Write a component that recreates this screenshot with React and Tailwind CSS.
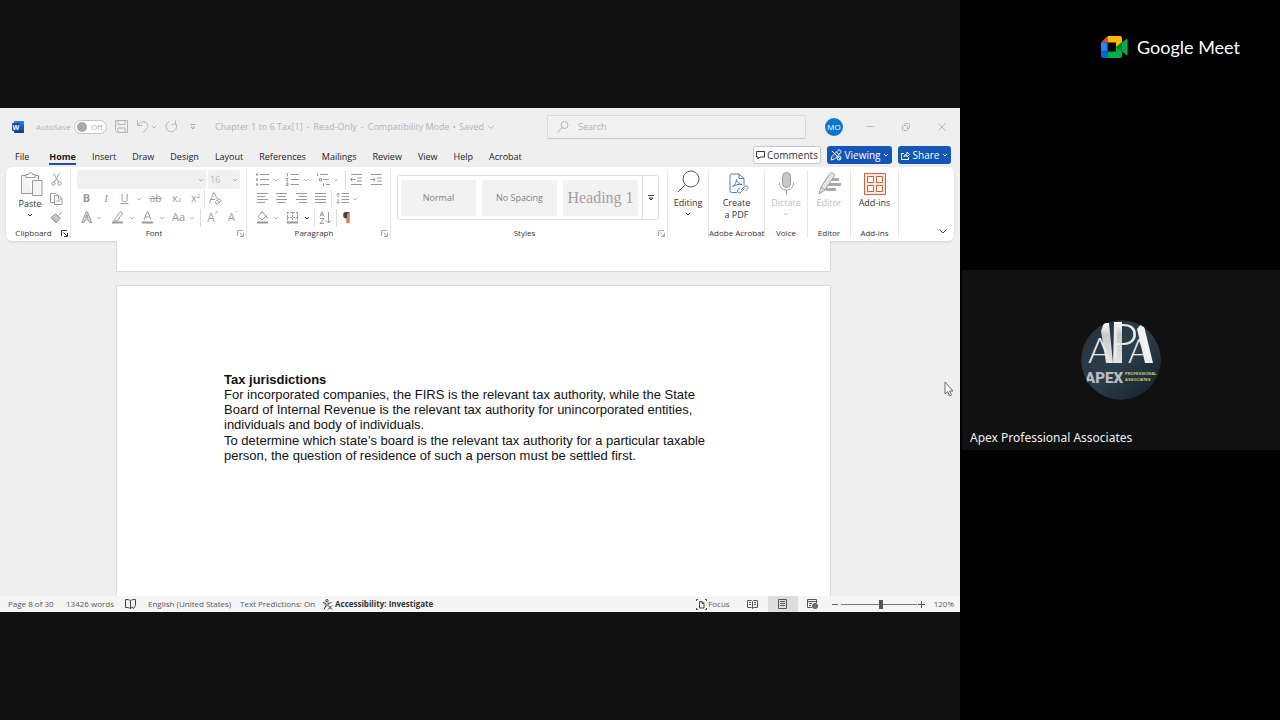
import React from "react";

const tabs = [
  "File",
  "Home",
  "Insert",
  "Draw",
  "Design",
  "Layout",
  "References",
  "Mailings",
  "Review",
  "View",
  "Help",
  "Acrobat",
];

function Chevron({ className = "text-[#b4b4b4]" }) {
  return (
    <svg className={`h-[6px] w-[6px] shrink-0 ${className}`} viewBox="0 0 6 6" fill="none" stroke="currentColor">
      <path d="M1 2l2 2 2-2" />
    </svg>
  );
}

function Tool({ label, className = "w-4", children }) {
  return (
    <button aria-label={label} className={`flex h-[19px] shrink-0 items-center justify-center ${className}`}>
      {children}
    </button>
  );
}

function MenuTool({ label, className = "", chevron, children }) {
  return (
    <button aria-label={label} className={`flex h-[19px] shrink-0 items-center justify-between ${className}`}>
      {children}
      <Chevron className={chevron} />
    </button>
  );
}

function Line({ className = "" }) {
  return <span className={`h-[18px] w-px shrink-0 bg-[#dcdcdc] ${className}`} />;
}

function Glyph({ children, className = "" }) {
  return (
    <svg
      className={`h-[13px] w-[13px] shrink-0 ${className}`}
      viewBox="0 0 13 13"
      fill="none"
      stroke="currentColor"
    >
      {children}
    </svg>
  );
}

function Group({ label, className = "", launcher, children }) {
  return (
    <section className={`flex shrink-0 flex-col border-r border-[#e8e8e8] ${className}`}>
      <div className="h-[58px]">{children}</div>
      <div className="flex h-[10px] items-center text-[8px] leading-[10px] text-[#333]">
        <span className="flex-1 text-center whitespace-nowrap">{label}</span>
        {launcher && (
          <button aria-label={`${label} settings`} className={`mr-[2px] ${launcher}`}>
            <svg className="h-[7px] w-[7px]" viewBox="0 0 7 7" fill="none" stroke="currentColor">
              <path d="M.5 6V.5H6M2.500 2.500l3.500 3.500M6.500 3v3.500H3" />
            </svg>
          </button>
        )}
      </div>
    </section>
  );
}

function BigButton({ label, className = "text-[#333]", icon, arrow, lines }) {
  return (
    <button aria-label={label} className={`flex w-full flex-col items-center text-[9px] leading-[12px] ${className}`}>
      <span className="flex h-[27px] items-center">{icon}</span>
      {lines.map((line) => (
        <span key={line} className="whitespace-nowrap">
          {line}
        </span>
      ))}
      {arrow && <Chevron className="mt-[2px] text-current" />}
    </button>
  );
}

function TitleBar() {
  return (
    <header className="flex h-[37px] items-center text-[9px] text-[#b4b4b4]">
      <div className="flex w-[547px] shrink-0 items-center pl-3">
        <svg className="h-3 w-3" viewBox="0 0 12 12">
          <rect x="2" width="10" height="12" rx="1" fill="#2b7cd3" />
          <rect x="2" y="3" width="10" height="3" fill="#2368c4" />
          <rect x="2" y="6" width="10" height="3" fill="#185abd" />
          <path d="M2 9h10v2a1 1 0 01-1 1H3a1 1 0 01-1-1z" fill="#103f91" />
          <rect y="2" width="8" height="8" rx="1" fill="#164a9c" />
          <text x="4" y="8.500" textAnchor="middle" fontSize="7" fontWeight="700" fill="#fff">
            W
          </text>
        </svg>
        <label htmlFor="autosave" className="ml-3 w-[38px] text-[8px]">
          AutoSave
        </label>
        <button
          id="autosave"
          role="switch"
          aria-checked="false"
          className="flex h-[14px] w-[33px] items-center gap-1 rounded-full border border-[#c4c4c4] bg-white pl-[2px] text-[8px]"
        >
          <span className="h-[10px] w-[10px] rounded-full bg-[#a9a9a9]" />
          Off
        </button>
        <Tool label="Save" className="ml-[7px] w-[14px]">
          <Glyph>
            <path d="M1 .5h11.500v12H2.500l-2-2V.5zM3 .5v4h7v-4M3 12.500V8h7v4.500" />
          </Glyph>
        </Tool>
        <MenuTool label="Undo" className="ml-2 w-[21px]">
          <Glyph>
            <path d="M1.500.5v5h5M1.500 5.500C4 2 7.500.8 10 2.500s2.300 4.500.5 6.200L7 12.500" />
          </Glyph>
        </MenuTool>
        <Tool label="Redo" className="ml-[7px] w-[14px]">
          <Glyph>
            <path d="M10.500.5v3.800H6.700M4 1.700a5.300 5.300 0 106.500 1.500" />
          </Glyph>
        </Tool>
        <Tool label="Customize toolbar" className="ml-[7px] w-4">
          <svg className="h-[6px] w-[6px]" viewBox="0 0 6 6" fill="none" stroke="currentColor">
            <path d="M0 .5h6M1 3h4L3 5z" />
          </svg>
        </Tool>
        <button className="ml-[14px] flex items-center gap-[3px] whitespace-nowrap">
          <span>Chapter 1 to 6 Tax[1]</span>
          <span className="px-px">-</span>
          <span>Read-Only</span>
          <span className="px-px">-</span>
          <span>Compatibility Mode</span>
          <span>•</span>
          <span>Saved</span>
          <svg className="h-2 w-2" viewBox="0 0 8 8" fill="none" stroke="currentColor">
            <path d="M1 2.500l3 3 3-3" />
          </svg>
        </button>
      </div>
      <label className="flex h-6 flex-1 items-center gap-[9px] rounded-[2px] border border-[#dadada] border-b-[#c8c8c8] bg-[#f1f1f1] px-[9px]">
        <svg className="h-3 w-3 shrink-0" viewBox="0 0 12 12" fill="none" stroke="currentColor">
          <circle cx="7.500" cy="4" r="3.500" />
          <path d="M5 6.500L.5 11.500" />
        </svg>
        <input
          aria-label="Search"
          placeholder="Search"
          className="w-full bg-transparent text-[9px] outline-none placeholder:text-[#b0b0b0]"
        />
      </label>
      <div className="flex w-[154px] shrink-0 items-center pl-[19px]">
        <button className="flex h-[18px] w-[18px] items-center justify-center rounded-full bg-[#0a78d0] text-[8px] text-white">
          MO
        </button>
        <Tool label="Minimize" className="ml-[18px] w-[18px]">
          <span className="h-px w-2 bg-[#bdbdbd]" />
        </Tool>
        <Tool label="Restore" className="ml-[18px] w-[18px]">
          <svg className="h-2 w-2" viewBox="0 0 8 8" fill="none" stroke="currentColor">
            <rect x=".5" y="2.500" width="5" height="5" rx="1" />
            <path d="M2.500 2V1.500a1 1 0 011-1h3a1 1 0 011 1v3a1 1 0 01-1 1H6" />
          </svg>
        </Tool>
        <Tool label="Close" className="ml-[18px] w-[18px]">
          <svg className="h-2 w-2" viewBox="0 0 8 8" fill="none" stroke="currentColor">
            <path d="M.5.5l7 7M7.500.5l-7 7" />
          </svg>
        </Tool>
      </div>
    </header>
  );
}

function TabBar() {
  return (
    <div className="flex h-[22px] items-center pr-[9px] pl-[15px]">
      <nav className="flex flex-1 items-center gap-4 text-[9px] text-[#222]">
        {tabs.map((tab) => (
          <a
            key={tab}
            href="#"
            className={
              tab === "Home"
                ? "ml-1 border-b-2 border-[#1d4f9e] pt-[2px] leading-[13px] font-bold"
                : "leading-[13px]"
            }
          >
            {tab}
          </a>
        ))}
      </nav>
      <div className="mb-[2px] flex gap-[6px] text-[10px]">
        <button className="flex h-[18px] w-[68px] items-center justify-center gap-[2px] rounded-[3px] border border-[#c6c6c6] bg-white text-[#333]">
          <svg className="h-[9px] w-[9px]" viewBox="0 0 9 9" fill="none" stroke="currentColor">
            <path d="M1 .5h7.500v5.500H4L2 8V6H.5V.5z" />
          </svg>
          Comments
        </button>
        <button className="flex h-[18px] w-[65px] items-center justify-center gap-[3px] rounded-[3px] bg-[#1356b8] text-white">
          <svg className="h-3 w-3" viewBox="0 0 12 12" fill="none" stroke="currentColor">
            <path d="M1 11l1-3.500L8 1.500a1.600 1.600 0 012.500 2.300L4.500 10zM2 2l8.500 8.500M6.500 3l2.500 2.500" />
            <circle cx="9" cy="9" r="2" />
          </svg>
          Viewing
          <Chevron className="text-white" />
        </button>
        <button className="flex h-[18px] w-[53px] items-center justify-center gap-[3px] rounded-[3px] bg-[#1356b8] text-white">
          <svg className="h-[9px] w-[9px]" viewBox="0 0 9 9" fill="none" stroke="currentColor">
            <path d="M3 2.500H.5v6h7V6.500M3 6c.3-2 1.500-3 3-3V1l2.500 2.500L6 6V4.500c-1.300 0-2.200.4-3 1.500z" />
          </svg>
          Share
          <Chevron className="text-white" />
        </button>
      </div>
    </div>
  );
}

function ClipboardGroup() {
  return (
    <Group label="Clipboard" launcher="text-[#333]" className="w-[65px]">
      <div className="flex">
        <button className="ml-[10px] flex w-7 flex-col items-center text-[9px] leading-[12px] text-[#333]">
          <svg className="mt-[2px] mb-[2px] ml-1 h-6 w-[22px] text-[#999]" viewBox="0 0 22 24" fill="none" stroke="currentColor">
            <path d="M5 3.500H.5v18H11M13 3.500h4.500V8" fill="#f3f3f3" />
            <path d="M5 5.500v-3h2.500a2 2 0 014 0H14v3z" fill="#fff" />
            <path d="M11.500 8.500h9.500v15h-9.500z" fill="#f6f6f6" />
          </svg>
          Paste
          <Chevron className="mt-[2px] text-[#444]" />
        </button>
        <div className="ml-1 flex flex-col text-[#999]">
          <Tool label="Cut">
            <Glyph>
              <path d="M3.500.5l5 8.500M9.500.5L4.500 9" />
              <circle cx="3.500" cy="10.500" r="1.700" />
              <circle cx="9.500" cy="10.500" r="1.700" />
            </Glyph>
          </Tool>
          <Tool label="Copy">
            <Glyph>
              <path d="M4 10.500H.5v-9H6l2 2M4.500 3.500H9l3 3v6H4.500zM8.500 3.500v3.500H12M6.500 9h3.500" />
            </Glyph>
          </Tool>
          <Tool label="Format Painter">
            <Glyph>
              <path d="M12 .8L8.500 4.500M5.500 3L10 7.500M5.500 3L1 6.500 6 12l4-4.500zM3 8l2-1.500M4.500 10l2-2" fill="#ccc" />
            </Glyph>
          </Tool>
        </div>
      </div>
    </Group>
  );
}

function FontGroup() {
  return (
    <Group label="Font" launcher="text-[#a8a8a8]" className="w-[176px]">
      <div className="flex flex-col pl-[6px] text-[#9a9a9a]">
        <div className="flex h-[19px] gap-[2px] text-[9px]">
          <div className="flex w-[129px] items-center rounded-[2px] bg-[#f0f0f0] pr-[2px]">
            <select aria-label="Font name" className="min-w-0 flex-1 appearance-none bg-transparent">
              <option></option>
            </select>
            <Chevron />
          </div>
          <div className="flex w-8 items-center rounded-[2px] bg-[#f0f0f0] pr-[2px] pl-[2px]">
            <select aria-label="Font size" className="min-w-0 flex-1 appearance-none bg-transparent text-[#bbb]">
              <option>16</option>
            </select>
            <Chevron />
          </div>
        </div>
        <div className="flex h-[19px] items-center text-[11px]">
          <Tool label="Bold" className="w-[19px] font-bold">
            B
          </Tool>
          <Tool label="Italic" className="w-5 font-['Liberation_Serif',serif] italic">
            I
          </Tool>
          <Tool label="Underline" className="w-[17px] underline">
            U
          </Tool>
          <Tool label="Underline style" className="w-3">
            <Chevron />
          </Tool>
          <Tool label="Strikethrough" className="w-[21px] text-[10px] line-through">
            ab
          </Tool>
          <Tool label="Subscript" className="w-[21px]">
            x<sub className="text-[6px]">2</sub>
          </Tool>
          <Tool label="Superscript" className="w-[17px]">
            x<sup className="text-[6px]">2</sup>
          </Tool>
          <Line />
          <Tool label="Clear formatting" className="w-[21px]">
            <Glyph>
              <path d="M.5 11L4.500.8h.8L8 6.500M2 7.500h4M6.500 10l3-3.500 2.500 2-3 3.500H7.500zM8 8.300l2.500 2" />
            </Glyph>
          </Tool>
        </div>
        <div className="flex h-[19px] items-center text-[11px]">
          <MenuTool label="Text effects" className="ml-1 w-[21px]">
            <Glyph className="-mr-1">
              <path d="M.8 11.500L5 1h1.500l4.200 10.500H8.500l-1-2.700H4l-1 2.700zM4.800 6.700h2L5.800 3.500z" fill="#ddd" />
            </Glyph>
          </MenuTool>
          <MenuTool label="Highlight color" className="ml-[9px] w-[24px]">
            <Glyph>
              <path d="M3.500 8.500L9 1.200c1-1 3 .4 2.200 1.700L6 10H3z" />
              <path d="M1 11.500h11" strokeWidth="2" />
            </Glyph>
          </MenuTool>
          <MenuTool label="Font color" className="ml-[6px] w-[24px]">
            <Glyph>
              <path d="M3 8.500L6.200.8h.6L10 8.500M4 6h5" />
              <path d="M1 11.500h11" strokeWidth="2" />
            </Glyph>
          </MenuTool>
          <MenuTool label="Change case" className="ml-[7px] w-[23px]">
            Aa
          </MenuTool>
          <Line className="ml-[5px]" />
          <Tool label="Grow font" className="ml-1 w-4 text-[12px]">
            A<sup className="text-[7px]">^</sup>
          </Tool>
          <Tool label="Shrink font" className="ml-1 w-4">
            A<sup className="text-[7px]">ˇ</sup>
          </Tool>
        </div>
      </div>
    </Group>
  );
}

function ParagraphGroup() {
  return (
    <Group label="Paragraph" launcher="text-[#a8a8a8]" className="w-36">
      <div className="flex flex-col pl-[9px] text-[#999]">
        <div className="flex h-[19px] items-center">
          <MenuTool label="Bullets" className="w-[23px]">
            <Glyph>
              <path d="M4 1.500h9M4 6.500h9M4 11.500h9" />
              <path d="M0 1.500h2M0 6.500h2M0 11.500h2" strokeWidth="2" />
            </Glyph>
          </MenuTool>
          <MenuTool label="Numbering" className="ml-[7px] w-[23px]">
            <Glyph>
              <path d="M4.500 1.500H13M4.500 6.500H13M4.500 11.500H13M.5.5h1v3M0 5.500h2L.5 8H2M0 10h2v2.500H0M.5 11.200H2" />
            </Glyph>
          </MenuTool>
          <MenuTool label="Multilevel list" className="ml-[8px] w-[22px]">
            <Glyph>
              <path d="M3 1.500h8M6 6.500h6M9 11.500h4M.5 0v3M2.500 5.500h2v2.500h-2zM6.500 10v3" />
            </Glyph>
          </MenuTool>
          <Line className="ml-[6px]" />
          <Tool label="Decrease indent" className="ml-1 w-[13px]">
            <Glyph>
              <path d="M1 1.500h11M7 5h5M7 8h5M1 11.500h11M5.500 6.500h-5M2.500 4.500l-2 2 2 2" />
            </Glyph>
          </Tool>
          <Tool label="Increase indent" className="ml-[7px] w-[13px]">
            <Glyph>
              <path d="M1 1.500h11M7 5h5M7 8h5M1 11.500h11M0 6.500h5M3 4.500l2 2-2 2" />
            </Glyph>
          </Tool>
        </div>
        <div className="flex h-[19px] items-center">
          <Tool label="Align left" className="w-3">
            <Glyph>
              <path d="M1 1.500h11M1 4.500h8M1 7.500h11M1 10.500h8" />
            </Glyph>
          </Tool>
          <Tool label="Center" className="ml-[7px] w-[13px]">
            <Glyph>
              <path d="M1 1.500h11M2.500 4.500h8M1 7.500h11M2.500 10.500h8" />
            </Glyph>
          </Tool>
          <Tool label="Align right" className="ml-[7px] w-[13px]">
            <Glyph>
              <path d="M1 1.500h11M4 4.500h8M1 7.500h11M4 10.500h8" />
            </Glyph>
          </Tool>
          <Tool label="Justify" className="ml-[6px] w-[13px]">
            <Glyph>
              <path d="M1 1.500h11M1 4.500h11M1 7.500h11M1 10.500h11" />
            </Glyph>
          </Tool>
          <Line className="ml-1" />
          <MenuTool label="Line spacing" className="ml-1 w-[22px]">
            <Glyph>
              <path d="M5.500 1.500H13M5.500 4.500H13M5.500 7.500H13M5.500 10.500H13M2 1v4.500M2 7v4.500M.5 2.500L2 1l1.500 1.500M.5 10L2 11.500 3.500 10" />
            </Glyph>
          </MenuTool>
        </div>
        <div className="flex h-[19px] items-center">
          <MenuTool label="Shading" className="w-[23px]">
            <Glyph>
              <path d="M6 1L2 5.500l4 3.500 4-4zM4.500 3L6 .5l1.500 2M10 4.500l1.500 3" />
              <path d="M1 11.500h11" strokeWidth="2" />
            </Glyph>
          </MenuTool>
          <MenuTool label="Borders" className="ml-[7px] w-[24px]" chevron="text-[#333]">
            <Glyph>
              <path d="M1 1.500h11M1 6.500h11M1.500 1v10M6.500 1v10M11.500 1v10" strokeDasharray="2 1" />
              <path d="M1 11.500h11" strokeWidth="2" />
            </Glyph>
          </MenuTool>
          <Line className="ml-1" />
          <Tool label="Sort" className="ml-1 w-[13px]">
            <Glyph>
              <path d="M1 5.500L3 .8l2 4.700M1.500 4h3M1 7.500h4l-4 5h4M9.500 1v11M7 9.500l2.500 2.500L12 9.500" />
            </Glyph>
          </Tool>
          <Line className="ml-1" />
          <Tool label="Show paragraph marks" className="ml-px w-[17px] text-[12px] font-bold text-[#444]">
            ¶
          </Tool>
        </div>
      </div>
    </Group>
  );
}

function StylesGroup() {
  return (
    <Group label="Styles" launcher="text-[#a8a8a8]" className="w-[277px]">
      <div className="mx-[6px] flex pt-[5px]">
        <div className="flex h-[45px] w-[262px] items-center rounded-[3px] border border-[#dedede] pl-[3px] text-[9px] text-[#808080]">
          <button className="h-9 w-[75px] bg-[#f3f2f2]">Normal</button>
          <button className="ml-[6px] h-9 w-[75px] bg-[#f3f2f2]">No Spacing</button>
          <button className="ml-[6px] h-9 w-[75px] bg-[#f3f2f2] font-['Liberation_Serif',serif] text-[16px] whitespace-nowrap text-[#a0a0a0]">
            Heading 1
          </button>
          <button
            aria-label="More styles"
            className="ml-1 flex h-full flex-1 items-center justify-center border-l border-[#dedede] text-[#444]"
          >
            <svg className="h-[6px] w-[6px]" viewBox="0 0 6 6" fill="none" stroke="currentColor">
              <path d="M0 .5h6M1 3h4L3 5z" />
            </svg>
          </button>
        </div>
      </div>
    </Group>
  );
}

function Ribbon() {
  return (
    <div className="mx-[6px] flex h-[74px] rounded-[6px] bg-white py-[3px] shadow-sm">
      <ClipboardGroup />
      <FontGroup />
      <ParagraphGroup />
      <StylesGroup />
      <Group label="" className="w-[41px]">
        <BigButton
          label="Editing"
          arrow
          lines={["Editing"]}
          icon={
            <svg className="mb-1 h-[23px] w-[23px]" viewBox="0 0 23 23" fill="none" stroke="#555">
              <circle cx="14" cy="9" r="8" />
              <path d="M8.500 14.500L1 22" />
            </svg>
          }
        />
      </Group>
      <Group label="Adobe Acrobat" className="w-14">
        <BigButton
          label="Create a PDF"
          lines={["Create", "a PDF"]}
          icon={
            <svg className="mt-px ml-1 h-[22px] w-[20px]" viewBox="0 0 20 22" fill="none" stroke="#4a7ebb">
              <path d="M8 19.500H2.500a1.500 1.500 0 01-1.500-1.500V2.500A1.500 1.500 0 012.500 1H10l5 4.500v7M10 1v4.500h5" />
              <path d="M3.500 13.500c2.500-1.200 4-4.500 4-7 1 3 2.500 5 5.500 5-4-.5-6.500.500-9.500 2z" />
              <path d="M12 17l3.500-3.500a2 2 0 013 2.700L16.500 18M15.500 15.500L12 19.300a2 2 0 01-3-2.700l2-2" />
            </svg>
          }
        />
      </Group>
      <Group label="Voice" className="w-[43px]">
        <BigButton
          label="Dictate"
          arrow
          className="text-[#bdbdbd]"
          lines={["Dictate"]}
          icon={
            <svg className="h-[23px] w-4" viewBox="0 0 16 23" fill="none" stroke="#999">
              <rect x="4.500" y=".5" width="8" height="15" rx="4" fill="#c8c8c8" />
              <path d="M1.500 10.500c0 4.500 2.500 7.500 7 7.500s7-3 7-7.500M8.500 18v4.500" />
            </svg>
          }
        />
      </Group>
      <Group label="Editor" className="w-[43px]">
        <BigButton
          label="Editor"
          className="text-[#bdbdbd]"
          lines={["Editor"]}
          icon={
            <svg className="h-[23px] w-[23px]" viewBox="0 0 23 23" fill="none" stroke="#999">
              <path d="M12 7.500h9M10 12.500h13M8 17.500h10" strokeWidth="3" stroke="#aaa" />
              <path d="M1 22l2-7L12 1.500c1.500-2 5.500.500 4.200 2.800L7 18z" fill="#e4e4e4" />
              <path d="M3 15l4 3" />
            </svg>
          }
        />
      </Group>
      <Group label="Add-ins" className="w-[48px]">
        <BigButton
          label="Add-ins"
          lines={["Add-ins"]}
          icon={
            <svg className="h-[22px] w-[22px]" viewBox="0 0 22 22" fill="none" stroke="#c8643c">
              <path d="M.5.5h21v21H.5z" fill="#fbe9e0" />
              <path d="M3.500 3.500h6v6h-6zM12.500 3.500h6v6h-6zM3.500 12.500h6v6h-6zM12.500 12.500h6v6h-6z" fill="#fff" />
            </svg>
          }
        />
      </Group>
      <div className="flex flex-1 items-end justify-end pr-[7px] pb-[3px]">
        <button aria-label="Collapse ribbon" className="text-[#444]">
          <svg className="h-2 w-2" viewBox="0 0 8 8" fill="none" stroke="currentColor">
            <path d="M.5 2.500L4 6l3.500-3.500" />
          </svg>
        </button>
      </div>
    </div>
  );
}

function DocumentArea() {
  return (
    <main className="flex flex-1 flex-col pr-[129px] pl-[116px]">
      <div className="h-[31px] border border-t-0 border-[#d9d9d9] bg-white" />
      <article className="mt-[13px] flex-1 border border-b-0 border-[#d9d9d9] bg-white pt-[86px] pr-[110px] pl-[107px] font-['Liberation_Sans',Arial,sans-serif] text-[13px] leading-[15px] text-[#111]">
        <h1 className="font-bold">Tax jurisdictions</h1>
        <p>
          For incorporated companies, the FIRS is the relevant tax authority, while the State
          <br />
          Board of Internal Revenue is the relevant tax authority for unincorporated entities,
          <br />
          individuals and body of individuals.
        </p>
        <p className="mt-px">
          To determine which state’s board is the relevant tax authority for a particular taxable
          <br />
          person, the question of residence of such a person must be settled first.
        </p>
      </article>
    </main>
  );
}

function StatusBar() {
  return (
    <footer className="flex h-4 items-center bg-[#f5f5f5] pr-[6px] pl-2 text-[8px] whitespace-nowrap text-[#555]">
      <span className="w-[58px]">Page 8 of 30</span>
      <span className="w-[59px]">13426 words</span>
      <button aria-label="Proofing" className="w-[23px] text-[#444]">
        <svg className="h-[10px] w-[11px]" viewBox="0 0 11 10" fill="none" stroke="currentColor">
          <path d="M5.500 1.500C4.500.7 2.500.5.500.5v8c2 0 4 .2 5 1 1-.8 1.500-1 2.500-1M5.500 1.500c1-.8 3-1 5-1v6M5.500 1.500v8M7.500 8l1 1.500 2-3" />
        </svg>
      </button>
      <span className="w-[92px]">English (United States)</span>
      <span className="w-[82px]">Text Predictions: On</span>
      <button className="flex items-center gap-[2px] font-bold text-[#333]">
        <svg className="h-[11px] w-[11px]" viewBox="0 0 11 11" fill="none" stroke="currentColor">
          <circle cx="5" cy="1.700" r="1.200" />
          <path d="M.8 3.500L4 4.500v2L2 10.500M9.500 3.500L6 4.500v2M4 7.500l1-1M6 6.500l4 4M10 6.500l-4 4" />
        </svg>
        Accessibility: Investigate
      </button>
      <div className="ml-auto flex h-full items-center">
        <button className="flex items-center gap-px">
          <svg className="h-[11px] w-[11px] text-[#444]" viewBox="0 0 11 11" fill="none" stroke="currentColor">
            <path d="M2 .5H.5V2M9 .5h1.500V2M2 10.500H.5V9M9 10.500h1.500V9M3.500 2.500h2.500l2 2v4.500H3.500zM6 2.500v2h2" />
          </svg>
          Focus
        </button>
        <Tool label="Read mode" className="ml-2 w-[30px]">
          <svg className="h-[9px] w-[11px]" viewBox="0 0 11 9" fill="none" stroke="currentColor">
            <path d="M.5.5h4l1 1 1-1h4v7h-4l-1 1-1-1h-4zM5.500 1.500v7M2 2.500h2M2 4.500h2M7 2.500h2M7 4.500h2" />
          </svg>
        </Tool>
        <button aria-label="Print layout" className="flex h-4 w-[30px] items-center justify-center bg-[#dedede]">
          <svg className="h-[10px] w-[9px]" viewBox="0 0 9 10" fill="none" stroke="currentColor">
            <path d="M.5.5h8v9h-8zM2 2.500h5M2 4.500h5M2 6.500h5" />
          </svg>
        </button>
        <Tool label="Web layout" className="w-[30px]">
          <svg className="h-[10px] w-[11px]" viewBox="0 0 11 10" fill="none" stroke="currentColor">
            <path d="M5 8.500H.5v-8h9V4M.5 2.500h9M2 4.500h3M2 6.500h2" />
            <circle cx="8" cy="7" r="2.500" fill="#777" />
          </svg>
        </Tool>
        <button aria-label="Zoom out" className="ml-1 flex w-[9px] items-center">
          <span className="h-px w-[6px] bg-[#666]" />
        </button>
        <input
          type="range"
          aria-label="Zoom"
          min="0"
          max="100"
          defaultValue="53"
          className="h-3 w-[76px] appearance-none bg-transparent [&::-webkit-slider-runnable-track]:h-px [&::-webkit-slider-runnable-track]:bg-[#777] [&::-webkit-slider-thumb]:-mt-1 [&::-webkit-slider-thumb]:h-[9px] [&::-webkit-slider-thumb]:w-1 [&::-webkit-slider-thumb]:appearance-none [&::-webkit-slider-thumb]:bg-[#555]"
        />
        <button aria-label="Zoom in" className="mr-[9px] ml-[1px]">
          <svg className="h-[7px] w-[7px]" viewBox="0 0 7 7" stroke="currentColor">
            <path d="M0 3.500h7M3.500 0v7" />
          </svg>
        </button>
        <span>120%</span>
      </div>
    </footer>
  );
}

function ApexAvatar() {
  return (
    <svg className="h-20 w-20 rounded-full" viewBox="0 0 80 80" role="img" aria-label="Apex logo">
      <defs>
        <linearGradient id="sky" x1="0" y1="0" x2="1" y2="1">
          <stop offset="0" stopColor="#25313b" />
          <stop offset=".5" stopColor="#2c3d4b" />
          <stop offset="1" stopColor="#141f29" />
        </linearGradient>
        <linearGradient id="slab" x1="0" y1="0" x2="0" y2="1">
          <stop offset="0" stopColor="#fff" />
          <stop offset=".3" stopColor="#c9cac6" />
          <stop offset="1" stopColor="#e4e4df" />
        </linearGradient>
      </defs>
      <circle cx="40" cy="40" r="40" fill="url(#sky)" />
      <path d="M20 11l3-8h5l4 40h-7z" fill="url(#slab)" />
      <path d="M33 2h8v41h-9z" fill="url(#slab)" />
      <path d="M56 9l4-5 3 2 9 37h-8z" fill="#f1f1ee" />
      <g fill="#e8ebec" fontFamily="Lato, sans-serif" fontWeight="300">
        <text x="7" y="43" fontSize="36">
          A
        </text>
        <text x="28" y="39" fontSize="50">
          P
        </text>
        <text x="47" y="43" fontSize="34">
          A
        </text>
      </g>
      <text x="4" y="63" fontSize="15" fontWeight="900" fontFamily="Roboto, sans-serif" fill="#b9bdc1">
        APEX
      </text>
      <g fill="#c9cf6a" fontSize="4" fontWeight="700" fontFamily="Liberation Sans, sans-serif">
        <text x="44" y="55">
          PROFESSIONAL
        </text>
        <text x="44" y="61">
          ASSOCIATES
        </text>
      </g>
    </svg>
  );
}

function MeetPanel() {
  return (
    <aside className="flex w-1/4 flex-col bg-black">
      <div className="flex-1">
        <div className="flex justify-end gap-[9px] pt-[34px] pr-10">
          <svg className="mt-[2px] h-[22px] w-[27px]" viewBox="0 0 27 22">
            <path d="M6.500 0v6.500H0z" fill="#ea4335" />
            <path d="M0 6.500h6.500v9H0z" fill="#2684fc" />
            <path d="M0 15.500h6.500V22H2a2 2 0 01-2-2z" fill="#0066da" />
            <path d="M6.500 0H19a2 2 0 012 2v5l-6 5V6.500H6.500z" fill="#ffba00" />
            <path d="M6.500 15.500H15V11l6 4v5a2 2 0 01-2 2H6.500z" fill="#00ac47" />
            <path d="M15 11l6-5v10z" fill="#00832d" />
            <path d="M21 6.500l4.300-3.500c.600-.5 1.200-.1 1.200.6v14.800c0 .7-.600 1.100-1.200.6L21 15.500z" fill="#00ac47" />
          </svg>
          <span className="font-['Lato',sans-serif] text-[18px] leading-[26px] whitespace-nowrap text-white">
            Google Meet
          </span>
        </div>
      </div>
      <div className="ml-[2px] flex h-[180px] flex-col items-center bg-[#111] pt-[50px]">
        <ApexAvatar />
        <p className="mt-auto w-full pb-1 pl-2 font-['Noto_Sans',sans-serif] text-[12px] leading-4 text-[#f0f0f0]">
          Apex Professional Associates
        </p>
      </div>
      <div className="flex-1" />
    </aside>
  );
}

export default function App() {
  return (
    <div className="flex h-screen overflow-hidden bg-[#111] font-['Open_Sans','Noto_Sans',sans-serif]">
      <div className="relative flex w-3/4 flex-col py-[108px]">
        <div className="flex flex-1 flex-col bg-[#efefef]">
          <TitleBar />
          <TabBar />
          <Ribbon />
          <DocumentArea />
          <StatusBar />
        </div>
        <svg className="absolute top-[381px] right-[6px] h-4 w-[10px]" viewBox="0 0 10 16">
          <path d="M1 1v12l2.700-2.500L5.500 15l2-1-2-4H9z" fill="#fff" stroke="#666" />
        </svg>
      </div>
      <MeetPanel />
    </div>
  );
}
